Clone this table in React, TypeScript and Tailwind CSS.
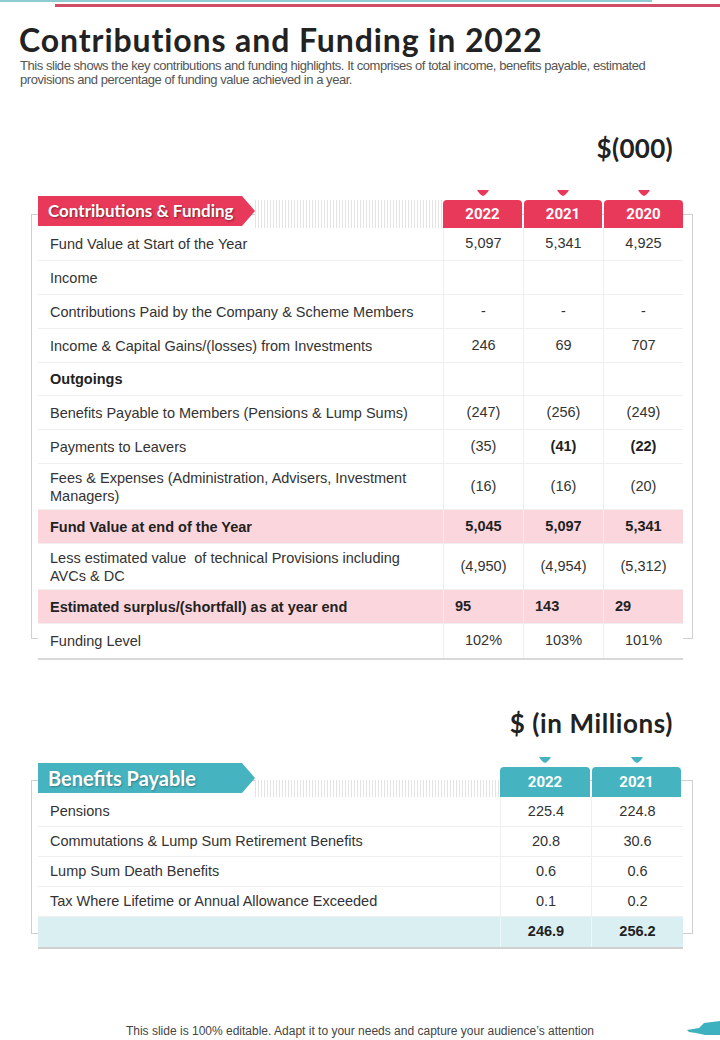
import React from "react";

type Row = {
  label: React.ReactNode;
  vals: string[];
  bold?: boolean;
  boldVals?: boolean[];
  pink?: boolean;
  left?: boolean;
  tall?: boolean;
  short?: boolean;
};

const rows1: Row[] = [
  { label: "Fund Value at Start of the Year", vals: ["5,097", "5,341", "4,925"], short: true },
  { label: "Income", vals: ["", "", ""] },
  { label: "Contributions Paid by the Company & Scheme Members", vals: ["-", "-", "-"] },
  { label: "Income & Capital Gains/(losses) from Investments", vals: ["246", "69", "707"] },
  { label: "Outgoings", vals: ["", "", ""], bold: true, short: true },
  { label: "Benefits Payable to Members (Pensions & Lump Sums)", vals: ["(247)", "(256)", "(249)"] },
  { label: "Payments to Leavers", vals: ["(35)", "(41)", "(22)"], boldVals: [false, true, true] },
  {
    label: (
      <>
        Fees &amp; Expenses (Administration, Advisers, Investment
        <br />
        Managers)
      </>
    ),
    vals: ["(16)", "(16)", "(20)"],
    tall: true,
  },
  { label: "Fund Value at end of the Year", vals: ["5,045", "5,097", "5,341"], bold: true, pink: true },
  {
    label: (
      <>
        Less estimated value &nbsp;of technical Provisions including
        <br />
        AVCs &amp; DC
      </>
    ),
    vals: ["(4,950)", "(4,954)", "(5,312)"],
    tall: true,
  },
  { label: "Estimated surplus/(shortfall) as at year end", vals: ["95", "143", "29"], bold: true, pink: true, left: true },
  { label: "Funding Level", vals: ["102%", "103%", "101%"] },
];

const rows2 = [
  { label: "Pensions", vals: ["225.4", "224.8"] },
  { label: "Commutations & Lump Sum Retirement Benefits", vals: ["20.8", "30.6"] },
  { label: "Lump Sum Death Benefits", vals: ["0.6", "0.6"] },
  { label: "Tax Where Lifetime or Annual Allowance Exceeded", vals: ["0.1", "0.2"] },
];

const Cap = ({ color }: { color: string }) => (
  <svg width="12" height="6" viewBox="0 0 12 6" className="mb-[4px]">
    <path d="M0 0 H12 Q9 5 6 6 Q3 5 0 0 Z" fill={color} />
  </svg>
);

const hatch =
  "bg-white bg-[repeating-linear-gradient(90deg,#e4e4e4_0_1px,transparent_1px_3px)]";

export default function App() {
  return (
    <div className="w-[720px] h-[1040px] bg-white flex flex-col font-['Liberation_Sans',Arial,sans-serif] text-[#333]">
      {/* top lines */}
      <div className="h-[2px] w-[652px] bg-[#8fcbd3]" />
      <div className="mt-[2px] ml-[55px] h-[3px] bg-[#cf4d68]" />

      <h1 className="mt-[17px] pl-[19px] text-[32px] leading-none font-bold text-[#222] font-['Lato',sans-serif] tracking-[0.9px]">
        Contributions and Funding in 2022
      </h1>
      <p className="mt-[3px] pl-[20px] text-[13px] leading-[14px] text-[#555] tracking-[-0.45px]">
        This slide shows the key contributions and funding highlights. It comprises of total income, benefits payable, estimated
        <br />
        provisions and percentage of funding value achieved in a year.
      </p>

      <div className="mt-[48px] pr-[47px] text-right text-[26px] leading-none font-bold text-[#222] font-['Lato',sans-serif] tracking-[0.3px]">
        $(000)
      </div>

      {/* table 1 */}
      <div className="relative mt-[29px] ml-[38px] w-[645px]">
        <div className="absolute top-[24px] -left-[7px] -right-[10px] bottom-[21px] border border-[#cfcfcf]" />
        <div className="relative flex items-end">
          <div className="relative z-10 mb-[2px] w-[217px] h-[30px] bg-[#e8395b] [clip-path:polygon(0_0,204px_0,100%_50%,204px_100%,0_100%)] flex items-center pl-[10px] text-white text-[17px] font-bold font-['Lato',sans-serif] [text-shadow:1px_1px_2px_rgba(0,0,0,0.45)]">
            Contributions &amp; Funding
          </div>
          <div className={`w-[188px] h-[28px] ${hatch}`} />
          <div className="flex gap-[2px]">
            {["2022", "2021", "2020"].map((y) => (
              <div key={y} className={`flex flex-col items-center ${y === "2021" ? "w-[78px]" : "w-[79px]"}`}>
                <Cap color="#e8395b" />
                <div className="w-full h-[28px] rounded-t-[4px] bg-[#e8395b] text-white flex items-center justify-center text-[15px] font-bold font-['Roboto',sans-serif]">
                  {y}
                </div>
              </div>
            ))}
          </div>
        </div>
        <div className="relative border-b-2 border-[#d8d8d8]">
          {rows1.map((r, i) => (
            <div
              key={i}
              className={`flex border-b border-[#efefef] text-[14.5px] ${r.pink ? "bg-[#fcd6dd]" : "bg-white"} ${
                r.tall ? "h-[46px]" : r.short ? "h-[33px]" : "h-[34px]"
              } ${i === rows1.length - 1 ? "border-b-0" : ""}`}
            >
              <div className={`w-[405px] pl-[12px] flex items-center leading-[18px] ${r.bold ? "font-bold text-[#222]" : ""}`}>
                {r.label}
              </div>
              {r.vals.map((v, j) => (
                <div
                  key={j}
                  className={`w-[80px] border-l border-[#efefef] flex items-center ${
                    r.left ? "justify-start pl-[11px]" : "justify-center"
                  } ${r.bold || (r.boldVals && r.boldVals[j]) ? "font-bold text-[#222]" : ""}`}
                >
                  {v}
                </div>
              ))}
            </div>
          ))}
        </div>
      </div>

      <div className="mt-[50px] pr-[47px] text-right text-[26px] leading-none font-bold text-[#222] font-['Lato',sans-serif] tracking-[0.6px]">
        $ (in Millions)
      </div>

      {/* table 2 */}
      <div className="relative mt-[21px] ml-[38px] w-[645px]">
        <div className="absolute top-[23px] -left-[7px] -right-[10px] bottom-[15px] border border-[#cfcfcf]" />
        <div className="relative flex items-end">
          <div className="relative z-10 mb-[4px] w-[217px] h-[30px] bg-[#45b4c0] [clip-path:polygon(0_0,204px_0,100%_50%,204px_100%,0_100%)] flex items-center pl-[10px] text-white text-[20px] font-bold font-['Lato',sans-serif] [text-shadow:1px_1px_2px_rgba(0,0,0,0.3)]">
            Benefits Payable
          </div>
          <div className={`w-[245px] h-[17px] ${hatch}`} />
          <div className="flex gap-[2px]">
            {["2022", "2021"].map((y) => (
              <div key={y} className={`flex flex-col items-center ${y === "2022" ? "w-[90px]" : "w-[89px]"}`}>
                <Cap color="#45b4c0" />
                <div className="w-full h-[30px] rounded-t-[4px] bg-[#45b4c0] text-white flex items-center justify-center text-[15px] font-bold font-['Roboto',sans-serif]">
                  {y}
                </div>
              </div>
            ))}
          </div>
        </div>
        <div className="relative border-b-2 border-[#d0d0d0]">
          {rows2.map((r, i) => (
            <div key={i} className="flex h-[30px] border-b border-[#efefef] bg-white text-[14.5px]">
              <div className="w-[462px] pl-[12px] flex items-center">{r.label}</div>
              <div className="w-[91px] border-l border-[#efefef] flex items-center justify-center">{r.vals[0]}</div>
              <div className="w-[92px] border-l border-[#efefef] flex items-center justify-center">{r.vals[1]}</div>
            </div>
          ))}
          <div className="flex h-[30px] bg-[#daeff2] text-[14.5px] font-bold text-[#222]">
            <div className="w-[462px]" />
            <div className="w-[91px] border-l border-[#eef8f9] flex items-center justify-center">246.9</div>
            <div className="w-[92px] border-l border-[#eef8f9] flex items-center justify-center">256.2</div>
          </div>
        </div>
      </div>

      {/* footer */}
      <div className="mt-auto relative h-[15px] mb-[1px] flex justify-center">
        <span className="text-[12px] leading-[14px] text-[#444]">
          This slide is 100% editable. Adapt it to your needs and capture your audience’s attention
        </span>
        <svg className="absolute right-0 -top-[3px]" width="33" height="16" viewBox="0 0 33 16">
          <path d="M0 9 L12 7 L17 2 L33 0 L33 14 L18 14 L9 12 L2 11 Z" fill="#3db1bf" />
        </svg>
      </div>
    </div>
  );
}
